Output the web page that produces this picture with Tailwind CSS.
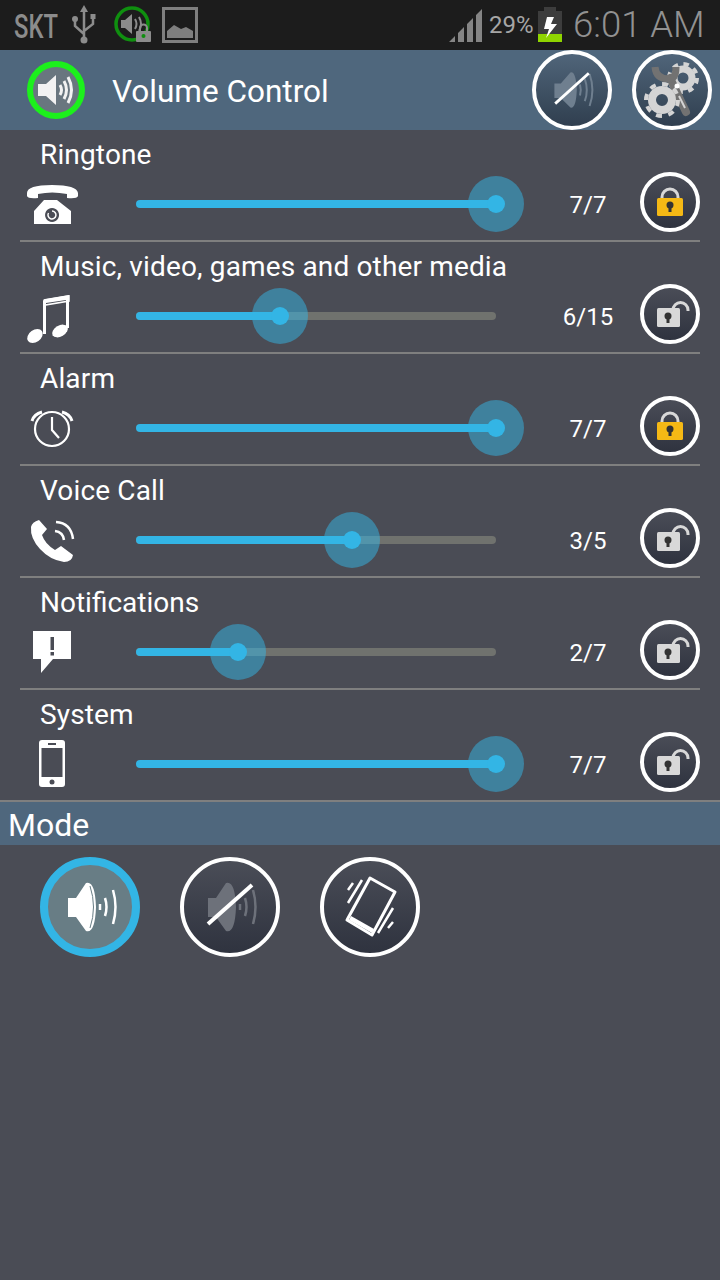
<!DOCTYPE html>
<html><head><meta charset="utf-8"><script src="https://cdn.jsdelivr.net/npm/@tailwindcss/browser@4"></script></head>
<body class="m-0">
<div class="w-[720px] h-[1280px] overflow-hidden bg-[#4a4c55] font-['Roboto',sans-serif] text-white">
  <!-- status bar -->
  <div class="h-[50px] bg-[#1c1c1c] flex items-center text-[#8c8c8c]">
    <span class="w-[46px] ml-[14px] text-[33px] leading-none origin-left scale-x-[0.72] font-medium mt-[2px] whitespace-nowrap">SKT</span>
    <svg class="ml-[12px] w-[24px] h-[40px]" viewBox="72 6 24 40" fill="none" stroke="#8c8c8c" stroke-width="2.5"><path d="M84 12V40M75 22v5l9 8M93 20v5l-9 7"/><path d="M84 6l-4 7h8z" fill="#8c8c8c" stroke="none"/><circle cx="84" cy="41" r="3.5" fill="#8c8c8c" stroke="none"/><circle cx="75" cy="20" r="3" fill="#8c8c8c" stroke="none"/><rect x="90.5" y="15" width="5" height="5" fill="#8c8c8c" stroke="none"/></svg>
    <svg class="ml-[16px] w-[40px] h-[40px]" viewBox="112 6 40 40"><circle cx="132" cy="25" r="16" fill="none" stroke="#0f8f0f" stroke-width="3.5"/><path d="M121 21h4l7-6v20l-7-6h-4z" fill="#8c8c8c"/><path d="M135 20q3 5 0 10M139 18q4 7 0 14" fill="none" stroke="#8c8c8c" stroke-width="2"/><rect x="136" y="32" width="15" height="11" rx="1" fill="#8c8c8c"/><path d="M140 32v-3a3.500 3.500 0 0 1 7 0v3" fill="none" stroke="#8c8c8c" stroke-width="2"/><circle cx="143.500" cy="37" r="2" fill="#0f8f0f"/></svg>
    <svg class="ml-[10px] w-[36px] h-[36px]" viewBox="162 7 36 36"><rect x="163.500" y="8.500" width="33" height="33" fill="none" stroke="#7f7f7f" stroke-width="3"/><path d="M167 38V31l7-6 7 4 5-2 7 4v7z" fill="#7f7f7f"/></svg>
    <svg class="ml-[251px] w-[33px] h-[33px] mt-[1px]" viewBox="449 9 33 33" fill="#858585"><path d="M449 42l6-6v6zM458 33l6-6v15h-6zM467 24l6-6v24h-6zM476 15l6-6v33h-6z"/></svg>
    <span class="ml-[7px] w-[49px] text-[24px] leading-none text-[#a6a6a6] whitespace-nowrap">29%</span>
    <svg class="w-[24px] h-[36px] mt-[-1px]" viewBox="538 7 24 36"><rect x="544" y="7" width="12" height="5" fill="#3d3d3d"/><rect x="538" y="11" width="24" height="24" fill="#3d3d3d"/><rect x="538" y="34" width="24" height="8" fill="#8fd400"/><path d="M554 17h-7l-3 12h5l-3 9 11-14h-6z" fill="#fff"/></svg>
    <span class="ml-[11px] text-[36.500px] leading-none font-light text-[#929292] whitespace-nowrap">6:01 AM</span>
  </div>
  <!-- header -->
  <div class="h-[80px] bg-[#4f677d] flex items-center">
    <div class="ml-[27px] w-[58px] h-[58px] rounded-full border-[6px] border-[#1cf01c] bg-[#69767f] flex items-center justify-center">
      <svg class="w-[46px] h-[46px]" viewBox="0 0 46 46"><path d="M5 17h8l10-9v30l-10-9H5z" fill="#f2f2f2"/><path d="M27 18q3 5 0 10M31 14q5 9 0 18M35 10q7 13 0 26" fill="none" stroke="#f2f2f2" stroke-width="3"/></svg>
    </div>
    <div class="ml-[27px] mt-[4px] text-[31.500px] leading-none w-[420px] whitespace-nowrap">Volume Control</div>
    <div class="w-[80px] h-[80px] rounded-full border-[4px] border-white bg-gradient-to-b from-[#50657a] to-[#303f4f] flex items-center justify-center">
      <svg class="w-[72px] h-[72px]" viewBox="5 5 90 90"><path d="M28 42h8l12-14q7-2 8 22q-1 24-8 22L36 60h-8z" fill="#6f7f8f"/><path d="M60 43q2 7 0 14M66 36q5 14 0 28M72 30q7 20 0 40" fill="none" stroke="#6f7f8f" stroke-width="2.500"/><path d="M29 67L71 29" stroke="#fff" stroke-width="3.500"/></svg>
    </div>
    <div class="ml-[20px] w-[80px] h-[80px] rounded-full border-[4px] border-white bg-gradient-to-b from-[#50657a] to-[#303f4f] flex items-center justify-center">
      <svg class="w-[72px] h-[72px]" viewBox="4 4 72 72" fill="none">
        <circle cx="51" cy="28" r="9" stroke="#d4d4d4" stroke-width="7"/><circle cx="51" cy="28" r="14" stroke="#d4d4d4" stroke-width="4" stroke-dasharray="5.500 5.500"/>
        <path d="M38 28L54 62" stroke="#727272" stroke-width="8" stroke-linecap="round"/><path d="M23 17q1 12 14 12q7 0 7-12" stroke="#727272" stroke-width="7"/>
        <circle cx="30" cy="50" r="10" stroke="#d4d4d4" stroke-width="8"/><circle cx="30" cy="50" r="16" stroke="#d4d4d4" stroke-width="4" stroke-dasharray="6 6.500"/>
        <circle cx="45" cy="36" r="2.500" fill="#fff"/><path d="M47 46l6 12" stroke="#d4d4d4" stroke-width="2"/>
      </svg>
    </div>
  </div>

  <!-- Ringtone -->
  <div class="mx-[20px] h-[112px] border-b-2 border-[#7f7f7f]">
    <div class="pl-[20px] h-[48px] text-[28px] tracking-[0.15px] leading-[50px]">Ringtone</div>
    <div class="h-[52px] flex items-center">
      <div class="w-[116px] h-[52px]"><svg class="w-[60px] h-[60px] -mt-[4px]" viewBox="0 0 60 60" fill="#fff"><path d="M7 19q0-8 25-8t26 8v3q-1 3-11 2v-4q-15-3-29 0v4q-10 1-11-2z"/><path d="M24 26h13l14 11v13H14V37zM32 34a7 7 0 1 0 .1 0z" fill-rule="evenodd"/><path d="M32 37a4 4 0 1 1-3.500 2" fill="none" stroke="#fff" stroke-width="1.500"/></svg></div>
      <div class="relative w-[360px] h-[8px] rounded-full bg-[#33b5e5]"><div class="absolute left-[332px] -top-[24px] w-[56px] h-[56px] rounded-full bg-[#33b5e5]/50 flex items-center justify-center"><div class="w-[18px] h-[18px] rounded-full bg-[#33b5e5]"></div></div></div>
      <div class="ml-[52px] mt-[2px] w-[80px] text-center text-[24px] leading-none">7/7</div>
      <div class="ml-[12px] -mt-[4px] w-[60px] h-[60px] rounded-full border-[4px] border-white bg-gradient-to-b from-[#4a4d57] to-[#2f333f]"><svg class="w-[52px] h-[52px]" viewBox="4 4 52 52"><path d="M22 30v-5a8 8 0 0 1 16 0v5" fill="none" stroke="#d8d8d8" stroke-width="3"/><rect x="17" y="26" width="26" height="18" rx="1.500" fill="#f5b915"/><circle cx="30" cy="33" r="3.500" fill="#333"/><rect x="28.500" y="34" width="3" height="6" fill="#333"/></svg></div>
    </div>
  </div>
  <!-- Music -->
  <div class="mx-[20px] h-[112px] border-b-2 border-[#7f7f7f]">
    <div class="pl-[20px] h-[48px] text-[28px] tracking-[0.15px] leading-[50px] whitespace-nowrap">Music, video, games and other media</div>
    <div class="h-[52px] flex items-center">
      <div class="w-[116px] h-[52px]"><svg class="w-[60px] h-[60px] -mt-[4px]" viewBox="0 0 60 60" fill="#fff"><path d="M23 48V15q0-2 2-2l24-4v33h-3V14l-20 3v31z"/><path d="M25 14l24-4v5l-24 4z" fill="none" stroke="#fff" stroke-width="1.500"/><ellipse cx="15" cy="50" rx="8.500" ry="6" transform="rotate(-35 15 50)"/><ellipse cx="40" cy="45" rx="8.500" ry="5.500" transform="rotate(-30 40 45)"/></svg></div>
      <div class="relative w-[360px] h-[8px] rounded-full bg-[#70726e]"><div class="w-[144px] h-[8px] rounded-full bg-[#33b5e5]"></div><div class="absolute left-[116px] -top-[24px] w-[56px] h-[56px] rounded-full bg-[#33b5e5]/50 flex items-center justify-center"><div class="w-[18px] h-[18px] rounded-full bg-[#33b5e5]"></div></div></div>
      <div class="ml-[52px] mt-[2px] w-[80px] text-center text-[24px] leading-none">6/15</div>
      <div class="ml-[12px] -mt-[4px] w-[60px] h-[60px] rounded-full border-[4px] border-white bg-gradient-to-b from-[#4a4d57] to-[#2f333f]"><svg class="w-[52px] h-[52px]" viewBox="4 4 52 52"><path d="M33 26a7.500 7.500 0 0 1 15 0v1" fill="none" stroke="#d8d8d8" stroke-width="3"/><rect x="17" y="24" width="23" height="19" rx="1.500" fill="#d8d8d8"/><circle cx="28" cy="32" r="3.500" fill="#333"/><rect x="26.500" y="33" width="3" height="6" fill="#333"/></svg></div>
    </div>
  </div>
  <!-- Alarm -->
  <div class="mx-[20px] h-[112px] border-b-2 border-[#7f7f7f]">
    <div class="pl-[20px] h-[48px] text-[28px] tracking-[0.15px] leading-[50px]">Alarm</div>
    <div class="h-[52px] flex items-center">
      <div class="w-[116px] h-[52px]"><svg class="w-[60px] h-[60px] -mt-[4px]" viewBox="0 0 60 60" fill="none" stroke="#fff" stroke-width="2.200"><circle cx="32" cy="31" r="17"/><path d="M32 19V32L39 40"/><path d="M12 23q2-7 10-9M52 23q-2-7-10-9" stroke-width="3"/></svg></div>
      <div class="relative w-[360px] h-[8px] rounded-full bg-[#33b5e5]"><div class="absolute left-[332px] -top-[24px] w-[56px] h-[56px] rounded-full bg-[#33b5e5]/50 flex items-center justify-center"><div class="w-[18px] h-[18px] rounded-full bg-[#33b5e5]"></div></div></div>
      <div class="ml-[52px] mt-[2px] w-[80px] text-center text-[24px] leading-none">7/7</div>
      <div class="ml-[12px] -mt-[4px] w-[60px] h-[60px] rounded-full border-[4px] border-white bg-gradient-to-b from-[#4a4d57] to-[#2f333f]"><svg class="w-[52px] h-[52px]" viewBox="4 4 52 52"><path d="M22 30v-5a8 8 0 0 1 16 0v5" fill="none" stroke="#d8d8d8" stroke-width="3"/><rect x="17" y="26" width="26" height="18" rx="1.500" fill="#f5b915"/><circle cx="30" cy="33" r="3.500" fill="#333"/><rect x="28.500" y="34" width="3" height="6" fill="#333"/></svg></div>
    </div>
  </div>
  <!-- Voice Call -->
  <div class="mx-[20px] h-[112px] border-b-2 border-[#7f7f7f]">
    <div class="pl-[20px] h-[48px] text-[28px] tracking-[0.15px] leading-[50px]">Voice Call</div>
    <div class="h-[52px] flex items-center">
      <div class="w-[116px] h-[52px]"><svg class="w-[60px] h-[60px] -mt-[4px]" viewBox="0 0 60 60" fill="none"><path d="M19 10l8 9-5 6q3 9 13 15l6-4 12 9q-1 7-9 7q-14-2-24-13T11 17q1-5 8-7z" fill="#fff"/><path d="M35 21q8 1 9 9M36 12q15 1 17 17" stroke="#fff" stroke-width="2.500"/></svg></div>
      <div class="relative w-[360px] h-[8px] rounded-full bg-[#70726e]"><div class="w-[216px] h-[8px] rounded-full bg-[#33b5e5]"></div><div class="absolute left-[188px] -top-[24px] w-[56px] h-[56px] rounded-full bg-[#33b5e5]/50 flex items-center justify-center"><div class="w-[18px] h-[18px] rounded-full bg-[#33b5e5]"></div></div></div>
      <div class="ml-[52px] mt-[2px] w-[80px] text-center text-[24px] leading-none">3/5</div>
      <div class="ml-[12px] -mt-[4px] w-[60px] h-[60px] rounded-full border-[4px] border-white bg-gradient-to-b from-[#4a4d57] to-[#2f333f]"><svg class="w-[52px] h-[52px]" viewBox="4 4 52 52"><path d="M33 26a7.500 7.500 0 0 1 15 0v1" fill="none" stroke="#d8d8d8" stroke-width="3"/><rect x="17" y="24" width="23" height="19" rx="1.500" fill="#d8d8d8"/><circle cx="28" cy="32" r="3.500" fill="#333"/><rect x="26.500" y="33" width="3" height="6" fill="#333"/></svg></div>
    </div>
  </div>
  <!-- Notifications -->
  <div class="mx-[20px] h-[112px] border-b-2 border-[#7f7f7f]">
    <div class="pl-[20px] h-[48px] text-[28px] leading-[50px]">Notifications</div>
    <div class="h-[52px] flex items-center">
      <div class="w-[116px] h-[52px]"><svg class="w-[60px] h-[60px] -mt-[4px]" viewBox="0 0 60 60"><path d="M13 9h38v28H33L21 51V37h-8z" fill="#fff"/><rect x="30.500" y="15" width="3.500" height="13" fill="#4a4c55"/><rect x="30.500" y="30" width="3.500" height="3.500" fill="#4a4c55"/></svg></div>
      <div class="relative w-[360px] h-[8px] rounded-full bg-[#70726e]"><div class="w-[102px] h-[8px] rounded-full bg-[#33b5e5]"></div><div class="absolute left-[74px] -top-[24px] w-[56px] h-[56px] rounded-full bg-[#33b5e5]/50 flex items-center justify-center"><div class="w-[18px] h-[18px] rounded-full bg-[#33b5e5]"></div></div></div>
      <div class="ml-[52px] mt-[2px] w-[80px] text-center text-[24px] leading-none">2/7</div>
      <div class="ml-[12px] -mt-[4px] w-[60px] h-[60px] rounded-full border-[4px] border-white bg-gradient-to-b from-[#4a4d57] to-[#2f333f]"><svg class="w-[52px] h-[52px]" viewBox="4 4 52 52"><path d="M33 26a7.500 7.500 0 0 1 15 0v1" fill="none" stroke="#d8d8d8" stroke-width="3"/><rect x="17" y="24" width="23" height="19" rx="1.500" fill="#d8d8d8"/><circle cx="28" cy="32" r="3.500" fill="#333"/><rect x="26.500" y="33" width="3" height="6" fill="#333"/></svg></div>
    </div>
  </div>
  <!-- System -->
  <div class="h-[112px] border-b-2 border-[#7f7f7f]">
    <div class="pl-[40px] h-[48px] text-[28px] tracking-[0.15px] leading-[50px]">System</div>
    <div class="h-[52px] flex items-center pl-[20px]">
      <div class="w-[116px] h-[52px]"><svg class="w-[60px] h-[60px] -mt-[4px]" viewBox="0 0 60 60"><rect x="19" y="6" width="26" height="47" rx="3" fill="#fff"/><rect x="21.500" y="14" width="21" height="29" fill="#4a4c55"/><rect x="28" y="9" width="8" height="2" fill="#4a4c55"/><circle cx="32" cy="48" r="2.500" fill="#4a4c55"/></svg></div>
      <div class="relative w-[360px] h-[8px] rounded-full bg-[#33b5e5]"><div class="absolute left-[332px] -top-[24px] w-[56px] h-[56px] rounded-full bg-[#33b5e5]/50 flex items-center justify-center"><div class="w-[18px] h-[18px] rounded-full bg-[#33b5e5]"></div></div></div>
      <div class="ml-[52px] mt-[2px] w-[80px] text-center text-[24px] leading-none">7/7</div>
      <div class="ml-[12px] -mt-[4px] w-[60px] h-[60px] rounded-full border-[4px] border-white bg-gradient-to-b from-[#4a4d57] to-[#2f333f]"><svg class="w-[52px] h-[52px]" viewBox="4 4 52 52"><path d="M33 26a7.500 7.500 0 0 1 15 0v1" fill="none" stroke="#d8d8d8" stroke-width="3"/><rect x="17" y="24" width="23" height="19" rx="1.500" fill="#d8d8d8"/><circle cx="28" cy="32" r="3.500" fill="#333"/><rect x="26.500" y="33" width="3" height="6" fill="#333"/></svg></div>
    </div>
  </div>
  <!-- Mode -->
  <div class="h-[43px] bg-[#4f677d] pl-[8px] text-[32px] leading-[47px]">Mode</div>
  <div class="pl-[40px] pt-[12px] flex gap-[40px]">
    <div class="w-[100px] h-[100px] rounded-full border-[8px] border-[#33b5e5] bg-[#687d85]"><svg class="w-[84px] h-[84px]" viewBox="8 8 84 84"><path d="M28 41h8L46 26q9-3 10 24q-1 27-10 24L36 60h-8z" fill="#fff"/><path d="M50 29q7 21 0 42" fill="none" stroke="#687d85" stroke-width="1"/><path d="M60 47v6M65 41q3 9 0 18M73 33q5 17 0 34" fill="none" stroke="#fff" stroke-width="2.500"/></svg></div>
    <div class="w-[100px] h-[100px] rounded-full border-[4px] border-white bg-gradient-to-b from-[#4a4d57] to-[#2f333f]"><svg class="w-[92px] h-[92px]" viewBox="4 4 92 92"><path d="M28 41h8L46 26q9-3 10 24q-1 27-10 24L36 60h-8z" fill="#6d717a"/><path d="M60 47v6M65 41q3 9 0 18M73 33q5 17 0 34" fill="none" stroke="#6d717a" stroke-width="2.500"/><path d="M28 67L72 28" stroke="#fff" stroke-width="4"/></svg></div>
    <div class="w-[100px] h-[100px] rounded-full border-[4px] border-white bg-gradient-to-b from-[#4a4d57] to-[#2f333f]"><svg class="w-[92px] h-[92px]" viewBox="4 4 92 92" fill="none" stroke="#fff"><path d="M50 21L75 35L52 78L27 63Z" stroke-width="3" stroke-linejoin="round"/><path d="M29 63L52 76L54 72L31 59Z" fill="#fff" stroke="none"/><path d="M28 33L33 26M28 46L42 23M58 76L73 51M68 71L73 65" stroke-width="2.500"/></svg></div>
  </div>
</div>
</body></html>
